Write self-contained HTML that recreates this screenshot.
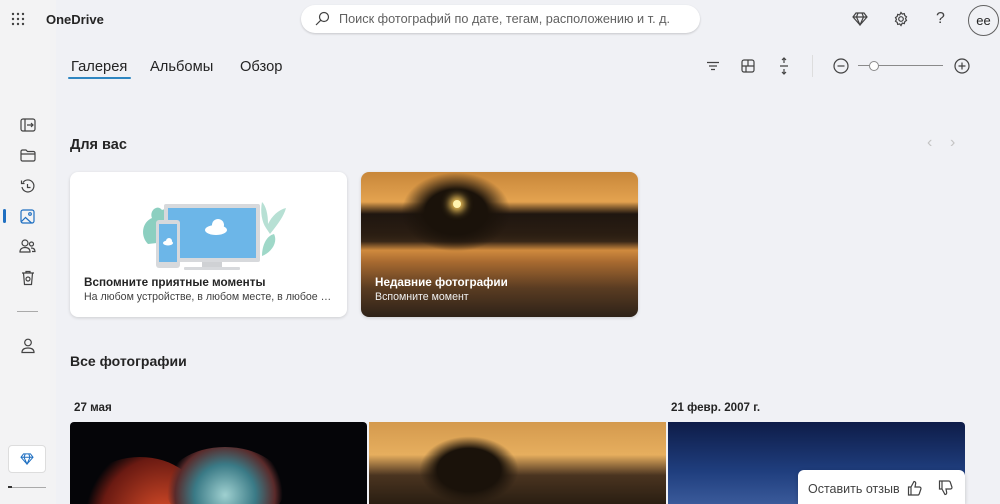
<!DOCTYPE html>
<html><head><meta charset="utf-8"><style>
*{margin:0;padding:0;box-sizing:border-box}
html,body{width:1000px;height:504px;overflow:hidden}
body{background:#f0f1f5;font-family:"Liberation Sans","DejaVu Sans",sans-serif;color:#242424;position:relative}
.a{position:absolute}
svg{position:absolute;fill:none;stroke:#424242;stroke-width:1.2}
.t{font-size:14.7px}
.card{background:#fff;border-radius:8px;box-shadow:0 1px 3px rgba(0,0,0,.15);overflow:hidden}
</style></head><body>
<div class="a" style="left:0;top:0;width:56px;height:504px;background:#f3f3f4"></div>
<svg style="left:11px;top:12px" width="14" height="14" viewBox="0 0 14 14"><g fill="#424242" stroke="none"><circle cx="2" cy="2" r="1.2"/><circle cx="7" cy="2" r="1.2"/><circle cx="12" cy="2" r="1.2"/><circle cx="2" cy="7" r="1.2"/><circle cx="7" cy="7" r="1.2"/><circle cx="12" cy="7" r="1.2"/><circle cx="2" cy="12" r="1.2"/><circle cx="7" cy="12" r="1.2"/><circle cx="12" cy="12" r="1.2"/></g></svg>
<div class="a" style="left:46px;top:12px;font-size:13px;font-weight:bold">OneDrive</div>
<div class="a" style="left:301px;top:5px;width:399px;height:28px;background:#fff;border-radius:14px;box-shadow:0 1px 2px rgba(0,0,0,.18)"></div>
<svg style="left:314px;top:11px" width="16" height="16" viewBox="0 0 16 16"><circle cx="10" cy="6" r="4.5"/><path d="M6.8 9.2L2 14"/></svg>
<div class="a" style="left:339px;top:12px;font-size:12.7px;color:#616161">Поиск фотографий по дате, тегам, расположению и т. д.</div>
<svg style="left:852px;top:12px" width="16" height="14" viewBox="0 0 16 14"><path d="M4 1h8l3 4-7 8-7-8z M1 5h14 M6 1l-1.5 4L8 13l3.5-8L10 1"/></svg>
<svg style="left:893px;top:11px" width="16" height="16" viewBox="0 0 16 16"><circle cx="8" cy="8" r="2.3"/><path d="M8 1.5l1.3 1.6 2-.5.5 2 1.7 1.2-1 1.8 1 1.8-1.7 1.2-.5 2-2-.5L8 14.5l-1.3-1.6-2 .5-.5-2L2.5 10.2l1-1.8-1-1.8 1.7-1.2.5-2 2 .5z"/></svg>
<div class="a" style="left:936px;top:10px;font-size:16px;color:#424242">?</div>
<div class="a" style="left:968px;top:5px;width:31px;height:31px;border:1px solid #616161;border-radius:50%;font-size:13px;text-align:center;line-height:29px">ee</div>
<div class="a t" style="left:71px;top:59px">Галерея</div>
<div class="a" style="left:68px;top:77px;width:63px;height:2px;background:#2e86c1;border-radius:1px"></div>
<div class="a t" style="left:150px;top:59px">Альбомы</div>
<div class="a t" style="left:240px;top:59px">Обзор</div>
<svg style="left:706px;top:59px" width="14" height="14" viewBox="0 0 14 14"><path d="M1 3.5h12M3 7h8M5 10.5h4"/></svg>
<svg style="left:741px;top:59px" width="14" height="14" viewBox="0 0 14 14"><rect x="1" y="1" width="12" height="12" rx="2"/><path d="M1 7h12M7 1v6M5 7v6"/></svg>
<svg style="left:778px;top:57px" width="12" height="18" viewBox="0 0 12 18"><path d="M6 1v5M4 3l2-2 2 2M6 17v-5M4 15l2 2 2-2M2 9h8"/></svg>
<div class="a" style="left:812px;top:55px;width:1px;height:22px;background:#ddd"></div>
<svg style="left:833px;top:58px" width="16" height="16" viewBox="0 0 16 16"><circle cx="8" cy="8" r="7"/><path d="M4.5 8h7"/></svg>
<div class="a" style="left:858px;top:65px;width:85px;height:1px;background:#8a8a8a"></div>
<div class="a" style="left:869px;top:61px;width:10px;height:10px;border:1px solid #8a8a8a;border-radius:50%;background:#fff"></div>
<svg style="left:954px;top:58px" width="16" height="16" viewBox="0 0 16 16"><circle cx="8" cy="8" r="7"/><path d="M4.5 8h7M8 4.5v7"/></svg>
<svg style="left:20px;top:118px" width="16" height="14" viewBox="0 0 16 14"><rect x="1" y="1" width="14" height="12" rx="2"/><path d="M5 1v12M7 7h6M11 5l2 2-2 2"/></svg>
<svg style="left:20px;top:149px" width="16" height="13" viewBox="0 0 16 13"><path d="M1 2.5a1.5 1.5 0 011.5-1.5h3.5l1.5 1.5h6a1.5 1.5 0 011.5 1.5v6.5a1.5 1.5 0 01-1.5 1.5h-11A1.5 1.5 0 011 10.5z M1 5h14"/></svg>
<svg style="left:20px;top:179px" width="16" height="16" viewBox="0 0 16 16"><path d="M3 3.5A6 6 0 112 8M1.5 1.5v3h3M7.5 5v3.5h3"/></svg>
<div class="a" style="left:3px;top:209px;width:3px;height:14px;background:#1f6fc1;border-radius:2px"></div>
<svg style="left:20px;top:209px;stroke:#1f6fc1" width="15" height="15" viewBox="0 0 15 15"><rect x="1" y="1" width="13" height="13" rx="2"/><path d="M1.5 12.5l4-4 6 5.5"/><circle cx="10" cy="5" r="1.3"/></svg>
<svg style="left:19px;top:239px" width="17" height="15" viewBox="0 0 17 15"><circle cx="6" cy="4" r="3"/><path d="M1 13c0-3 2-4.5 5-4.5s5 1.5 5 4.5z"/><circle cx="12.5" cy="5" r="2"/><path d="M12 9c2.5 0 4 1 4 3.5h-3"/></svg>
<svg style="left:21px;top:270px" width="14" height="16" viewBox="0 0 14 16"><path d="M1 3h12M5 3V1.5h4V3M2.5 3l1 11.5h7l1-11.5"/><circle cx="7" cy="9" r="2"/></svg>
<div class="a" style="left:17px;top:311px;width:21px;height:1px;background:#aaa"></div>
<svg style="left:21px;top:338px" width="14" height="16" viewBox="0 0 14 16"><circle cx="7" cy="4.5" r="3.3"/><path d="M1 14.5c0-3 2-4.5 6-4.5s6 1.5 6 4.5z"/></svg>
<div class="a" style="left:8px;top:445px;width:38px;height:28px;background:#fff;border:1px solid #ddd;border-radius:4px"></div>
<svg style="left:20px;top:453px;stroke:#1f6fc1" width="14" height="12" viewBox="0 0 16 14"><path d="M4 1h8l3 4-7 8-7-8z M1 5h14 M6 1l-1.5 4L8 13l3.5-8L10 1"/></svg>
<div class="a" style="left:8px;top:487px;width:38px;height:1px;background:#aaa"></div>
<div class="a" style="left:8px;top:486px;width:4px;height:2px;background:#333"></div>
<div class="a" style="left:70px;top:137px;font-size:14.5px;font-weight:bold">Для вас</div>
<div class="a" style="left:927px;top:134px;font-size:16px;color:#c4c4c4">‹</div>
<div class="a" style="left:950px;top:134px;font-size:16px;color:#c4c4c4">›</div>
<div class="a card" style="left:70px;top:172px;width:277px;height:145px">
 <svg style="left:60px;top:22px;stroke:none" width="160" height="80" viewBox="0 0 160 80">
  <path d="M18 50c-8-8-6-22 4-26-3-8 6-14 10-8 6-3 12 6 8 12 6 4 4 16-4 20z" fill="#8ccfc0"/>
  <path d="M140 40c8-10 14-18 16-26-8 2-14 8-18 16 0-10-2-18-6-22-2 10 0 20 4 26z" fill="#b7e0d4"/>
  <path d="M132 62c10-4 16-14 12-22-8 2-12 12-12 22z" fill="#9fd8c8"/>
  <rect x="34" y="10" width="96" height="58" rx="2" fill="#d7d9dc"/>
  <rect x="38" y="14" width="88" height="50" fill="#6cb6e8"/>
  <rect x="72" y="68" width="20" height="5" fill="#cfd1d4"/>
  <rect x="54" y="73" width="56" height="3" rx="1" fill="#d7d9dc"/>
  <rect x="26" y="26" width="24" height="48" rx="3" fill="#d7d9dc"/>
  <rect x="29" y="30" width="18" height="38" fill="#6cb6e8"/>
  <ellipse cx="86" cy="36" rx="11" ry="5" fill="#fff"/><circle cx="88" cy="31" r="6" fill="#fff"/>
  <ellipse cx="38" cy="49" rx="5" ry="2.5" fill="#fff"/><circle cx="39" cy="47" r="3" fill="#fff"/>
 </svg>
 <div class="a" style="left:14px;top:104px;font-size:11.7px;font-weight:bold">Вспомните приятные моменты</div>
 <div class="a" style="left:14px;top:119px;width:252px;font-size:10.6px;color:#424242;white-space:nowrap;overflow:hidden;text-overflow:ellipsis">На любом устройстве, в любом месте, в любое время</div>
</div>
<div class="a card" style="left:361px;top:172px;width:277px;height:145px;background:linear-gradient(180deg,#c8873a 0%,#e3a24f 20%,#c98a40 36%,#2e2114 40%,#3a2818 48%,#cf8a3e 54%,#a86a30 62%,#5a3c22 80%,#2e2218 100%)">
 <div class="a" style="left:0;top:30px;width:277px;height:40px;background:linear-gradient(180deg,transparent,#1f1610 30%,#2a1d12 80%,transparent)"></div>
 <div class="a" style="left:40px;top:0;width:110px;height:80px;background:radial-gradient(ellipse at 50% 50%,#1a120a 40%,transparent 70%)"></div>
 <div class="a" style="left:92px;top:28px;width:8px;height:8px;border-radius:50%;background:#fff4b0;box-shadow:0 0 8px 4px #ffd060"></div>
 <div class="a" style="left:14px;top:104px;font-size:11.7px;font-weight:bold;color:#fff">Недавние фотографии</div>
 <div class="a" style="left:14px;top:119px;font-size:10.6px;color:#f0f0f0">Вспомните момент</div>
</div>
<div class="a" style="left:70px;top:353px;font-size:14px;font-weight:bold">Все фотографии</div>
<div class="a" style="left:74px;top:401px;font-size:11.6px;font-weight:bold">27 мая</div>
<div class="a" style="left:671px;top:401px;font-size:11.6px;font-weight:bold">21 февр. 2007 г.</div>
<div class="a" style="left:70px;top:422px;width:297px;height:82px;background:#050508;border-radius:4px 4px 0 0;overflow:hidden">
 <div class="a" style="left:10px;top:35px;width:120px;height:90px;border-radius:50%;background:radial-gradient(circle at 70% 70%,#e0502a,#6a1a12 60%,transparent 75%)"></div>
 <div class="a" style="left:95px;top:25px;width:120px;height:80px;border-radius:50%;background:radial-gradient(circle at 50% 60%,#9fd0d0,#3a7a86 40%,#5a2a2a 65%,transparent 75%)"></div>
</div>
<div class="a" style="left:369px;top:422px;width:297px;height:82px;background:linear-gradient(180deg,#d49a4e,#e6ae5e 40%,#4a3420 65%,#2a1e12);overflow:hidden">
 <div class="a" style="left:50px;top:14px;width:100px;height:68px;background:radial-gradient(ellipse,#1a120a 45%,transparent 70%)"></div>
</div>
<div class="a" style="left:668px;top:422px;width:297px;height:82px;background:linear-gradient(180deg,#0e1c48,#1f3e7e 60%,#3a5a9a);border-radius:0 4px 0 0"></div>
<div class="a" style="left:798px;top:470px;width:167px;height:34px;background:#fff;border-radius:6px 6px 0 0;box-shadow:0 1px 4px rgba(0,0,0,.2)"></div>
<div class="a" style="left:808px;top:482px;font-size:12.5px;color:#424242">Оставить отзыв</div>
<svg style="left:907px;top:480px" width="15" height="16" viewBox="0 0 15 16"><path d="M4 7l3-5.5c1.3 0 2 1 1.6 2.4L8 7h4.5a1.5 1.5 0 011.4 2l-1.7 5a1.5 1.5 0 01-1.4 1H4zM4 7H1.5v8H4"/></svg>
<svg style="left:938px;top:480px" width="15" height="16" viewBox="0 0 15 16"><path d="M4 9l3 5.5c1.3 0 2-1 1.6-2.4L8 9h4.5a1.5 1.5 0 001.4-2l-1.7-5A1.5 1.5 0 0010.8 1H4zM4 9H1.5V1H4"/></svg>
</body></html>
